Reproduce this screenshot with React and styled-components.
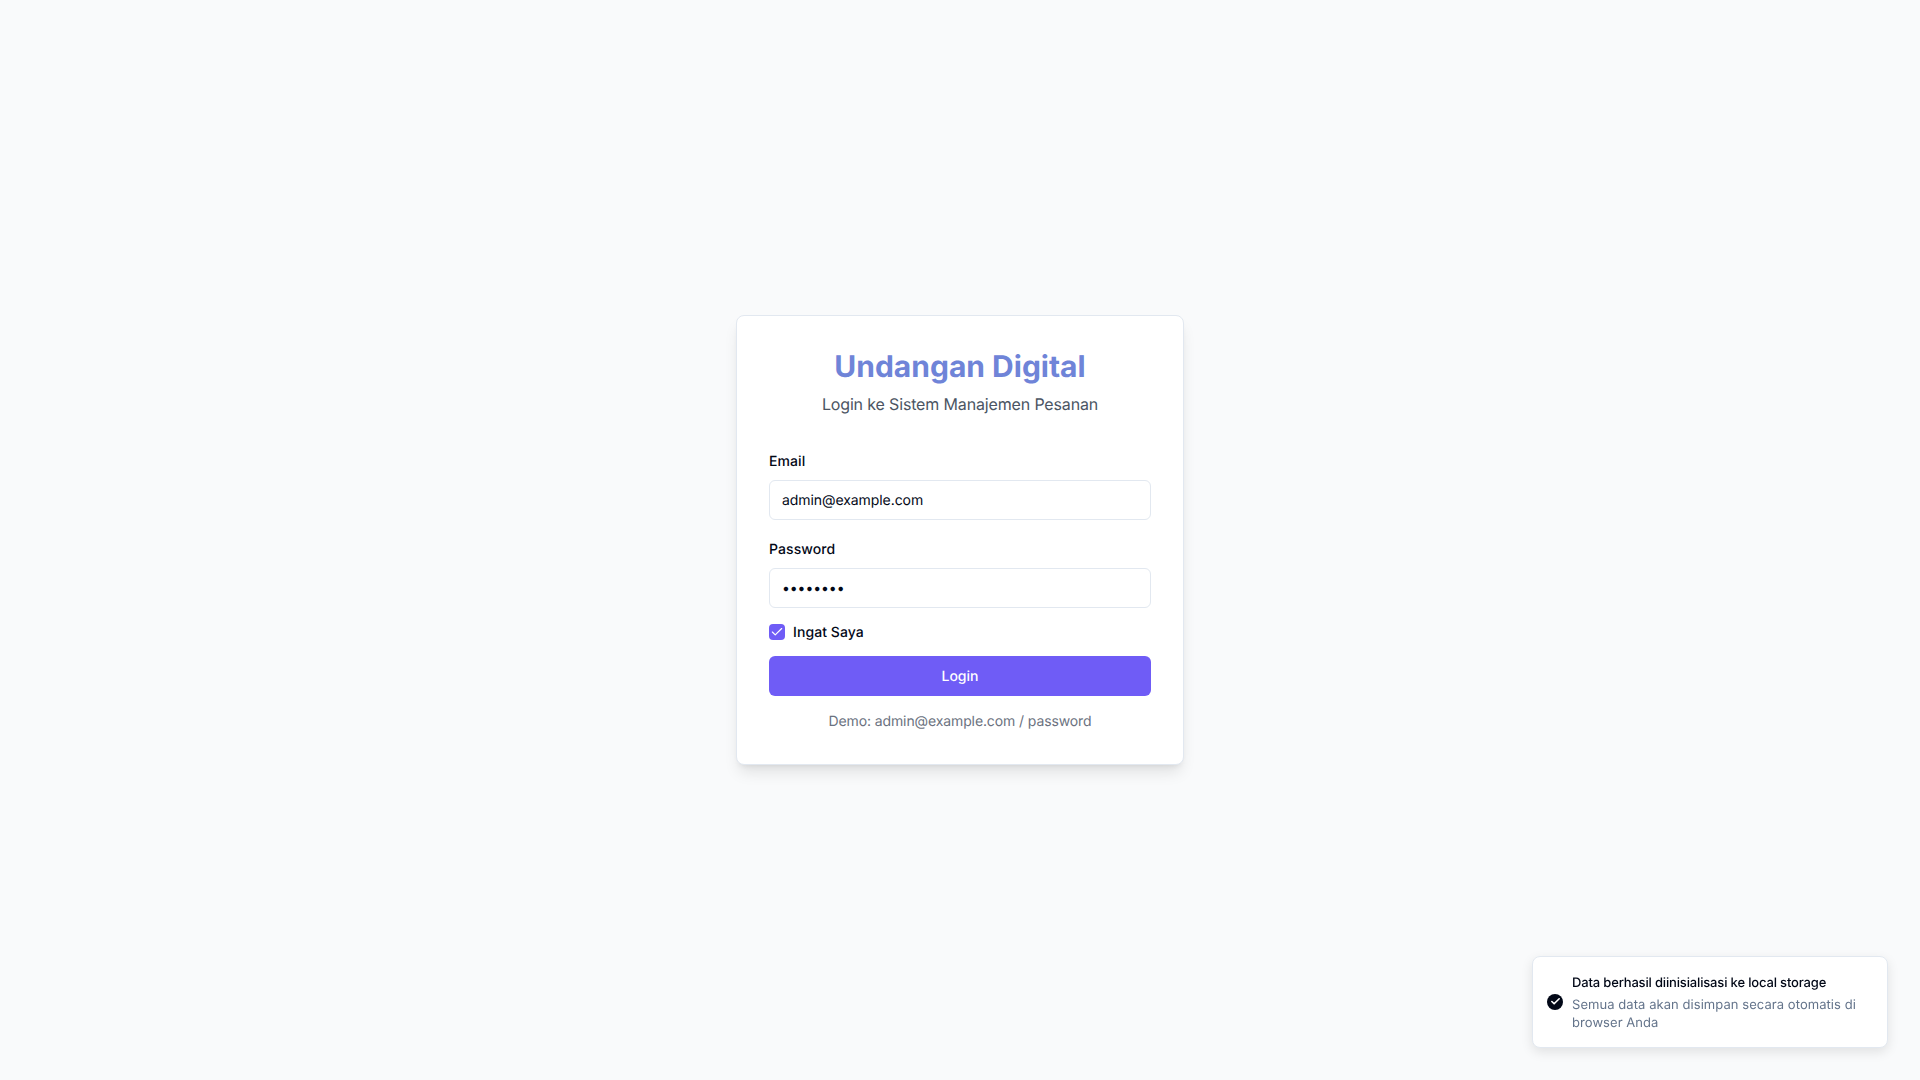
import styled, { createGlobalStyle } from "styled-components";
import { Check } from "lucide-react";

const GlobalStyle = createGlobalStyle`
  * {
    box-sizing: border-box;
  }
  body {
    margin: 0;
    background: #f9fafb;
    color: #020817;
    font-family: Inter, "Liberation Sans", sans-serif;
    text-rendering: geometricPrecision;
  }
`;

const Page = styled.div`
  min-height: 100vh;
  display: flex;
  align-items: center;
  justify-content: center;
`;

const Card = styled.form`
  width: 448px;
  padding: 32px;
  background: white;
  border: 1px solid #e2e8f0;
  border-radius: 8px;
  box-shadow: 0 10px 15px -3px rgba(0, 0, 0, 0.1), 0 4px 6px -4px rgba(0, 0, 0, 0.1);
`;

const Header = styled.div`
  text-align: center;
  margin-bottom: 32px;
`;

const Title = styled.h1`
  margin: 0 0 6px;
  font-size: 30px;
  line-height: 38px;
  font-weight: 700;
  color: #6f84d8;
`;

const Subtitle = styled.p`
  margin: 0;
  font-size: 16px;
  line-height: 24px;
  letter-spacing: -0.15px;
  color: #4b5563;
`;

const Field = styled.div`
  display: flex;
  flex-direction: column;
  gap: 8px;
  margin-bottom: 16px;
`;

const Label = styled.label`
  padding-top: 4px;
  font-size: 14px;
  line-height: 20px;
  font-weight: 500;
  letter-spacing: 0.08px;
`;

const RememberLabel = styled(Label)`
  padding-top: 0;
  margin-bottom: -2px;
  line-height: 18px;
`;

const Input = styled.input`
  width: 100%;
  height: 40px;
  padding: 1px 12px 0;
  background: white;
  border: 1px solid #e2e8f0;
  border-radius: 6px;
  color: inherit;
  font-family: inherit;
  font-size: 14px;
  letter-spacing: -0.07px;
  text-rendering: geometricPrecision;
  outline: none;
`;

const RememberRow = styled.div`
  display: flex;
  align-items: center;
  gap: 8px;
  margin-bottom: 16px;
`;

const CheckBox = styled.span`
  width: 16px;
  height: 16px;
  display: flex;
  align-items: center;
  justify-content: center;
  background: #6f5cf6;
  border-radius: 4px;
  color: white;
`;

const Submit = styled.button`
  display: block;
  width: 100%;
  height: 40px;
  border: 0;
  border-radius: 6px;
  background: #6f5cf6;
  color: white;
  font-family: inherit;
  font-size: 14px;
  font-weight: 500;
  text-rendering: geometricPrecision;
`;

const Hint = styled.p`
  margin: 16px 0 0;
  text-align: center;
  font-size: 14px;
  line-height: 20px;
  letter-spacing: -0.11px;
  color: #6b7280;
`;

const Toast = styled.div`
  position: fixed;
  right: 32px;
  bottom: 32px;
  width: 356px;
  display: flex;
  align-items: center;
  gap: 8px;
  padding: 16px 14px;
  background: white;
  border: 1px solid #e2e8f0;
  border-radius: 8px;
  box-shadow: 0 4px 12px rgba(0, 0, 0, 0.1);
  font-size: 13px;
`;

const ToastIcon = styled.span`
  flex: none;
  width: 16px;
  height: 16px;
  margin-right: 1px;
  display: flex;
  align-items: center;
  justify-content: center;
  background: #020817;
  border-radius: 50%;
  color: white;
`;

const ToastBody = styled.div`
  padding-top: 1px;
  margin-bottom: -1px;
`;

const ToastTitle = styled.div`
  font-weight: 500;
  line-height: 19.5px;
  letter-spacing: -0.16px;
`;

const ToastText = styled.div`
  margin-top: 3px;
  line-height: 18px;
  letter-spacing: 0.06px;
  color: #64748b;
`;

export default function App() {
  return (
    <>
      <GlobalStyle />
      <Page>
        <Card onSubmit={(e) => e.preventDefault()}>
          <Header>
            <Title>Undangan Digital</Title>
            <Subtitle>Login ke Sistem Manajemen Pesanan</Subtitle>
          </Header>
          <Field>
            <Label htmlFor="email">Email</Label>
            <Input id="email" type="email" defaultValue="admin@example.com" />
          </Field>
          <Field>
            <Label htmlFor="password">Password</Label>
            <Input id="password" type="password" defaultValue="password" />
          </Field>
          <RememberRow>
            <CheckBox>
              <Check size={14} strokeWidth={2} />
            </CheckBox>
            <RememberLabel>Ingat Saya</RememberLabel>
          </RememberRow>
          <Submit type="submit">Login</Submit>
          <Hint>Demo: admin@example.com / password</Hint>
        </Card>
      </Page>
      <Toast>
        <ToastIcon>
          <Check size={11} strokeWidth={3.5} />
        </ToastIcon>
        <ToastBody>
          <ToastTitle>Data berhasil diinisialisasi ke local storage</ToastTitle>
          <ToastText>Semua data akan disimpan secara otomatis di browser Anda</ToastText>
        </ToastBody>
      </Toast>
    </>
  );
}
